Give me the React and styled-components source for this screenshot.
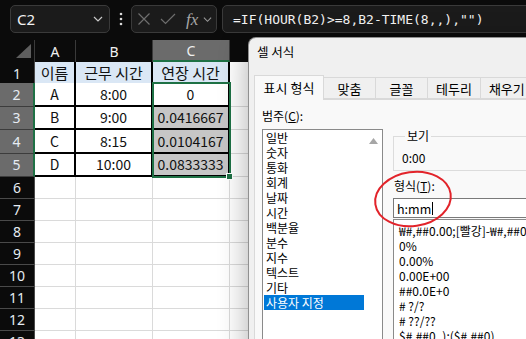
import React from 'react';
import styled, { createGlobalStyle } from 'styled-components';

const GREEN = '#1e7145';

const Global = createGlobalStyle`
  html, body { margin: 0; padding: 0; background: #0b0b0b; }
  body { width: 526px; height: 339px; overflow: hidden; }
`;

const Screen = styled.div`
  position: relative;
  width: 526px;
  height: 339px;
  overflow: hidden;
  background: #0b0b0b;
  font-family: "Noto Sans CJK KR", "Noto Sans", sans-serif;
`;

/* ---------- formula bar ---------- */
const TopBar = styled.div`
  display: flex;
  align-items: center;
  height: 28px;
  padding: 5px 0 7px 10px;
`;

const NameBox = styled.div`
  box-sizing: border-box;
  width: 100px;
  height: 28px;
  border: 1px solid #3a3a3a;
  border-radius: 5px;
  background: #1b1b1b;
  display: flex;
  align-items: center;
  justify-content: space-between;
  padding: 0 6px 0 6px;
  color: #f2f2f2;
  font: 15px "Noto Sans", sans-serif;
`;

const Dots = styled.div`
  width: 21px;
  display: flex;
  justify-content: center;
`;

const FxBox = styled.div`
  box-sizing: border-box;
  width: 86px;
  height: 28px;
  border: 1px solid #3a3a3a;
  border-radius: 5px;
  background: #1b1b1b;
  display: flex;
  align-items: center;
  padding-left: 5px;
  gap: 9px;
`;

const FxText = styled.span`
  font: italic 17px "Liberation Serif", serif;
  color: #a8a8a8;
  margin-left: 1px;
  margin-right: -4px;
  line-height: 1;
`;

const FormulaBox = styled.div`
  box-sizing: border-box;
  flex: 1;
  height: 28px;
  margin-left: 5px;
  margin-right: -12px;
  border: 1px solid #3a3a3a;
  border-radius: 5px;
  background: #1b1b1b;
  display: flex;
  align-items: center;
  padding-left: 10px;
  color: #f4f4f4;
  font: 13px "DejaVu Sans Mono", monospace;
  white-space: pre;
`;

/* ---------- sheet ---------- */
const Sheet = styled.div`
  display: flex;
  flex-direction: column;
`;

const SheetRow = styled.div`
  display: grid;
  grid-template-columns: 35px 41px 77px 77px 1fr;
  height: ${p => p.$h}px;
`;

const Corner = styled.div`
  background: #0b0b0b;
  border-right: 1px solid #3a3a3a;
  display: flex;
  align-items: flex-end;
  justify-content: flex-end;
  padding: 0 3px 4px 0;
`;

const ColHead = styled.div`
  box-sizing: border-box;
  background: ${p => (p.$sel ? '#6b6b6b' : '#0b0b0b')};
  color: #f0f0f0;
  border-right: 1px solid #3a3a3a;
  border-bottom: ${p => (p.$sel ? `2px solid ${GREEN}` : 'none')};
  display: flex;
  align-items: center;
  justify-content: center;
  font: 14px "Noto Sans", sans-serif;
`;

const RowHead = styled.div`
  box-sizing: border-box;
  background: ${p => (p.$sel ? '#6b6b6b' : '#0b0b0b')};
  color: #e6ebf2;
  border-bottom: 1px solid ${p => (p.$sel ? '#3c3c3c' : '#4a4a4a')};
  border-right: ${p => (p.$sel ? `2px solid ${GREEN}` : '1px solid #4a4a4a')};
  display: flex;
  align-items: center;
  justify-content: center;
  font: 14px "Noto Sans", sans-serif;
`;

const Cell = styled.div`
  position: relative;
  box-sizing: border-box;
  background: ${p => p.$bg || '#ffffff'};
  border-right: ${p => (p.$thick ? '2px solid #000' : '1px solid #dadada')};
  border-bottom: ${p => (p.$thick ? '2px solid #000' : '1px solid #dadada')};
  display: flex;
  align-items: center;
  justify-content: center;
  color: #111;
  font-size: ${p => (p.$head ? 15 : 14)}px;
  font-family: "Noto Sans CJK KR", sans-serif;
`;

const SelFrame = styled.div`
  position: absolute;
  left: -1px;
  top: -1px;
  width: 79px;
  height: 96px;
  box-sizing: border-box;
  border: 2px solid ${GREEN};
  pointer-events: none;
  z-index: 2;
`;

const FillHandle = styled.div`
  position: absolute;
  right: -4px;
  bottom: -4px;
  width: 5px;
  height: 5px;
  background: ${GREEN};
  border: 1px solid #fff;
`;

/* ---------- dialog ---------- */
const Dialog = styled.section`
  position: absolute;
  left: 248px;
  top: 37px;
  width: 330px;
  height: 340px;
  box-sizing: border-box;
  background: #f0f0f0;
  border: 1px solid rgba(0, 0, 0, 0.4);
  border-radius: 8px 8px 0 0;
  box-shadow: 0 6px 30px rgba(0, 0, 0, 0.32);
  display: flex;
  flex-direction: column;
  font-size: 12px;
  color: #000;
  z-index: 5;
`;

const TitleBar = styled.div`
  height: 26px;
  display: flex;
  align-items: center;
  padding-left: 8px;
  font-size: 12.5px;
`;

const TabStrip = styled.div`
  display: flex;
  align-items: flex-end;
  height: 24px;
  margin-top: 11px;
  padding-left: 5px;
  position: relative;
  z-index: 1;
`;

const Tab = styled.div`
  box-sizing: border-box;
  height: ${p => (p.$active ? 25 : 22)}px;
  min-width: ${p => (p.$active ? 70 : 53)}px;
  padding: 0 8px;
  margin-bottom: ${p => (p.$active ? -1 : 0)}px;
  margin-left: -1px;
  background: ${p => (p.$active ? '#f9f9f9' : '#f0f0f0')};
  border: 1px solid #d9d9d9;
  border-bottom: ${p => (p.$active ? 'none' : '1px solid #d9d9d9')};
  display: flex;
  align-items: center;
  justify-content: center;
  padding-bottom: ${p => (p.$active ? 1 : 0)}px;
  font-size: 13px;
  white-space: nowrap;
  &:first-child { margin-left: 0; }
`;

const Panel = styled.div`
  flex: 1;
  margin-left: 5px;
  background: #f9f9f9;
  border: 1px solid #d9d9d9;
  border-right: none;
  padding: 8px 0 0 7px;
  display: grid;
  grid-template-columns: 121px 1fr;
  column-gap: 10px;
  align-items: start;
`;

const Column = styled.div`
  display: flex;
  flex-direction: column;
  padding-top: ${p => p.$top || 0}px;
  min-width: 0;
`;

const Label = styled.div`
  line-height: 16px;
  height: 16px;
  padding-left: ${p => p.$indent || 0}px;
  margin-bottom: ${p => p.$gap || 0}px;
  white-space: nowrap;
`;

const U = styled.span`
  text-decoration: underline;
`;

const ListBox = styled.div`
  box-sizing: border-box;
  height: 230px;
  background: #fff;
  border: 1px solid #8a8a8a;
  display: flex;
`;

const Items = styled.div`
  flex: 1;
  padding: 0 1px;
`;

const Item = styled.div`
  height: 15px;
  line-height: 15px;
  padding-left: 2px;
  background: ${p => (p.$sel ? '#0078d7' : 'transparent')};
  color: ${p => (p.$sel ? '#fff' : '#000')};
  white-space: nowrap;
`;

const ScrollBar = styled.div`
  width: 17px;
  display: flex;
  justify-content: center;
  padding-top: 8px;
  box-sizing: border-box;
`;

const Group = styled.fieldset`
  margin: 0;
  padding: 6px 8px 5px 8px;
  border: 1px solid #dcdcdc;
  border-right: none;
  min-inline-size: 0;
`;

const Legend = styled.legend`
  padding: 0 2px;
  margin-left: 3px;
  line-height: 16px;
`;

const Preview = styled.div`
  line-height: 15px;
  height: 15px;
`;

const Input = styled.div`
  box-sizing: border-box;
  height: 20px;
  background: #fff;
  border: 1px solid #7a7a7a;
  border-right: none;
  display: flex;
  align-items: center;
  padding-left: 3px;
  font-size: 12.5px;
`;

const Caret = styled.span`
  display: inline-block;
  width: 0;
  height: 13px;
  border-left: 1px solid #000;
  margin-left: 1px;
`;

const FormatList = styled.div`
  box-sizing: border-box;
  margin-top: 1px;
  height: 140px;
  background: #fff;
  border: 1px solid #8a8a8a;
  border-right: none;
  padding: 3px 0 0 3px;
  white-space: nowrap;
  overflow: hidden;
`;

const Annotation = styled.svg`
  position: absolute;
  left: 368px;
  top: 166px;
  z-index: 10;
  pointer-events: none;
`;

const categories = ['일반', '숫자', '통화', '회계', '날짜', '시간', '백분율', '분수', '지수', '텍스트', '기타', '사용자 지정'];
const formats = ['₩#,##0.00;[빨강]-₩#,##0.00', '0%', '0.00%', '0.00E+00', '##0.0E+0', '# ?/?', '# ??/??', '$#,##0_);($#,##0)'];

const data = [
  ['A', '8:00', '0'],
  ['B', '9:00', '0.0416667'],
  ['C', '8:15', '0.0104167'],
  ['D', '10:00', '0.0833333'],
];

const Chevron = ({ size = 9, color = '#c8c8c8' }) => (
  <svg width={size} height={size} viewBox="0 0 10 10">
    <polyline points="1,3 5,7 9,3" fill="none" stroke={color} strokeWidth="1.2" />
  </svg>
);

export default function App() {
  return (
    <Screen>
      <Global />
      <TopBar>
        <NameBox>
          <span>C2</span>
          <Chevron size={10} />
        </NameBox>
        <Dots>
          <svg width="4" height="14" viewBox="0 0 4 14">
            <circle cx="2" cy="2" r="1.3" fill="#d8d8d8" />
            <circle cx="2" cy="7" r="1.3" fill="#d8d8d8" />
            <circle cx="2" cy="12" r="1.3" fill="#d8d8d8" />
          </svg>
        </Dots>
        <FxBox>
          <svg width="14" height="14" viewBox="0 0 14 14">
            <path d="M1.5 1.5 L12.5 12.5 M12.5 1.5 L1.5 12.5" stroke="#6e6e6e" strokeWidth="1.2" fill="none" />
          </svg>
          <svg width="16" height="12" viewBox="0 0 16 12">
            <polyline points="1,6 5.5,10.5 15,1" stroke="#6e6e6e" strokeWidth="1.2" fill="none" />
          </svg>
          <FxText>fx</FxText>
          <Chevron size={9} color="#9a9a9a" />
        </FxBox>
        <FormulaBox>{'=IF(HOUR(B2)>=8,B2-TIME(8,,),"")'}</FormulaBox>
      </TopBar>

      <Sheet>
        <SheetRow $h={22}>
          <Corner>
            <svg width="15" height="14" viewBox="0 0 15 14">
              <polygon points="15,0 15,14 0,14" fill="#5e5e5e" />
            </svg>
          </Corner>
          <ColHead>A</ColHead>
          <ColHead>B</ColHead>
          <ColHead $sel>C</ColHead>
          <ColHead />
        </SheetRow>
        <SheetRow $h={21}>
          <RowHead>1</RowHead>
          <Cell $thick $head $bg="#dae7f5">이름</Cell>
          <Cell $thick $head $bg="#dae7f5">근무 시간</Cell>
          <Cell $thick $head $bg="#dae7f5">연장 시간</Cell>
          <Cell />
        </SheetRow>
        {data.map((r, i) => (
          <SheetRow $h={23.5} key={i}>
            <RowHead $sel>{i + 2}</RowHead>
            <Cell $thick>{r[0]}</Cell>
            <Cell $thick>{r[1]}</Cell>
            <Cell $thick $bg={i === 0 ? '#ffffff' : '#c6c6c6'}>
              {r[2]}
              {i === 0 && (
                <SelFrame>
                  <FillHandle />
                </SelFrame>
              )}
            </Cell>
            <Cell />
          </SheetRow>
        ))}
        {[6, 7, 8, 9, 10, 11, 12, 13].map(n => (
          <SheetRow $h={22} key={n}>
            <RowHead>{n}</RowHead>
            <Cell />
            <Cell />
            <Cell />
            <Cell />
          </SheetRow>
        ))}
      </Sheet>

      <Dialog>
        <TitleBar>셀 서식</TitleBar>
        <TabStrip>
          <Tab $active>표시 형식</Tab>
          <Tab>맞춤</Tab>
          <Tab>글꼴</Tab>
          <Tab>테두리</Tab>
          <Tab>채우기</Tab>
        </TabStrip>
        <Panel>
          <Column>
            <Label $gap={5}>범주(<U>C</U>):</Label>
            <ListBox>
              <Items>
                {categories.map(c => (
                  <Item key={c} $sel={c === '사용자 지정'}>{c}</Item>
                ))}
              </Items>
              <ScrollBar>
                <svg width="9" height="6" viewBox="0 0 9 6">
                  <polygon points="4.5,0 9,6 0,6" fill="#a6a6a6" />
                </svg>
              </ScrollBar>
            </ListBox>
          </Column>
          <Column $top={20}>
            <Group>
              <Legend>보기</Legend>
              <Preview>0:00</Preview>
            </Group>
            <Label $indent={1} $gap={4} style={{ marginTop: 7 }}>형식(<U>T</U>):</Label>
            <Input>
              h:mm<Caret />
            </Input>
            <FormatList>
              {formats.map(f => (
                <Item key={f}>{f}</Item>
              ))}
            </FormatList>
          </Column>
        </Panel>
      </Dialog>

      <Annotation width="92" height="66" viewBox="0 0 92 66">
        <ellipse cx="45" cy="33" rx="38" ry="27" transform="rotate(-8 45 33)" fill="none" stroke="#e2232a" strokeWidth="2" />
      </Annotation>
    </Screen>
  );
}
